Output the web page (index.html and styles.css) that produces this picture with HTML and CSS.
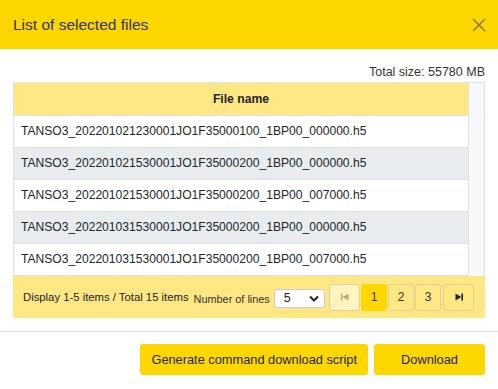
FILE: index.html
```html
<!DOCTYPE html>
<html>
<head>
  <link rel="stylesheet" href="styles.css">
</head>
<body>
  <div class="modal">
    <div class="modal-header">
      <span class="modal-title">List of selected files</span>
      <svg class="close" width="14" height="14" viewBox="0 0 14 14">
        <path d="M1 1 L13 13 M13 1 L1 13" stroke="currentColor" stroke-width="1.6" fill="none"/>
      </svg>
    </div>

    <div class="modal-body">
      <div class="total">Total size: 55780 MB</div>

      <div class="grid">
        <div class="grid-main">
          <div class="grid-head">File name</div>
          <div class="grid-row">TANSO3_202201021230001JO1F35000100_1BP00_000000.h5</div>
          <div class="grid-row alt">TANSO3_202201021530001JO1F35000200_1BP00_000000.h5</div>
          <div class="grid-row">TANSO3_202201021530001JO1F35000200_1BP00_007000.h5</div>
          <div class="grid-row alt">TANSO3_202201031530001JO1F35000200_1BP00_000000.h5</div>
          <div class="grid-row">TANSO3_202201031530001JO1F35000200_1BP00_007000.h5</div>
        </div>
        <div class="grid-scroll"></div>
      </div>

      <div class="pager">
        <span class="pager-info">Display 1-5 items / Total 15 items</span>
        <span class="pager-label">Number of lines</span>
        <div class="select">
          <span>5</span>
          <svg width="10" height="7" viewBox="0 0 10 7">
            <path d="M1 1.5 L5 5.5 L9 1.5" stroke="#222" stroke-width="2" fill="none"/>
          </svg>
        </div>
        <div class="pages">
          <div class="page disabled">
            <svg width="8" height="8" viewBox="0 0 8 8"><rect x="0" y="0.5" width="1.6" height="7" fill="#b9ad7a"/><path d="M7.5 0.5 L1.6 4 L7.5 7.5 Z" fill="#b9ad7a"/></svg>
          </div>
          <div class="page active">1</div>
          <div class="page">2</div>
          <div class="page">3</div>
          <div class="page wide">
            <svg width="8" height="8" viewBox="0 0 8 8"><path d="M0.5 0.5 L6.4 4 L0.5 7.5 Z" fill="#222"/><rect x="6.4" y="0.5" width="1.6" height="7" fill="#222"/></svg>
          </div>
        </div>
      </div>
    </div>

    <div class="modal-footer">
      <button class="btn">Generate command download script</button>
      <button class="btn btn-main">Download</button>
    </div>
  </div>
</body>
</html>
```

FILE: styles.css
```css
body {
  margin: 0;
  font-family: "Liberation Sans", Arial, sans-serif;
  color: #212529;
  background: #fff;
}

.modal {
  width: 498px;
  height: 389px;
  background: #fff;
}

.modal-header {
  height: 49px;
  background-color: #ffd700;
  display: flex;
  align-items: center;
  justify-content: space-between;
  padding: 0 12px 0 13px;
}

.modal-title {
  font-size: 15.5px;
  color: #333;
}

.close {
  color: #8c7a1c;
}

.modal-body {
  padding: 13px 13px 13px 13px;
}

.total {
  text-align: right;
  font-size: 12.5px;
  line-height: 20px;
  color: #333;
}

.grid {
  display: flex;
  border: 1px solid #dee2e6;
  border-bottom: none;
}

.grid-main {
  flex: 1;
}

.grid-scroll {
  width: 15px;
  background: #f7f8fa;
  border-left: 1px solid #dee2e6;
}

.grid-head {
  height: 32px;
  line-height: 32px;
  background-color: #ffe784;
  text-align: center;
  font-weight: bold;
  font-size: 12.2px;
  border-bottom: 1px solid #dee2e6;
}

.grid-row {
  height: 31px;
  line-height: 31px;
  padding-left: 7px;
  font-size: 12.1px;
  border-bottom: 1px solid #dee2e6;
  background: #fff;
}

.grid-row.alt {
  background: #e9ecef;
}

.pager {
  height: 42px;
  background-color: #ffe784;
  display: flex;
  align-items: center;
  padding: 0 11px 0 10px;
  white-space: nowrap;
}

.pager-info {
  font-size: 11.3px;
  margin-right: 5px;
}

.pager-label {
  font-size: 10.9px;
  margin-top: 3px;
  color: #333;
}

.select {
  flex-shrink: 0;
  height: 19px;
  width: 51px;
  margin-left: 4px;
  background: #fff;
  border: 1px solid #ccc;
  border-radius: 3px;
  display: flex;
  align-items: center;
  justify-content: space-between;
  padding: 0 5px 0 9px;
  box-sizing: border-box;
  font-size: 12.5px;
  margin-top: 2px;
}

.pages {
  display: flex;
  gap: 1px;
  margin-left: auto;
}

.page {
  width: 26px;
  height: 27px;
  box-sizing: border-box;
  border: 1px solid #ddd39a;
  border-radius: 3px;
  display: flex;
  align-items: center;
  justify-content: center;
  font-size: 12px;
  color: #333;
}

.page.disabled {
  width: 31px;
  background: #fff3c2;
}

.page.active {
  background: #ffd700;
  border-color: #ffd700;
}

.page.wide {
  width: 31px;
  margin-left: 1px;
}

.modal-footer {
  border-top: 1px solid #dee2e6;
  height: 56px;
  box-sizing: border-box;
  display: flex;
  justify-content: flex-end;
  align-items: center;
  gap: 6px;
  padding: 0 13px;
}

.btn {
  height: 31px;
  border: none;
  border-radius: 3px;
  background-color: #ffd700;
  font-family: "Liberation Sans", Arial, sans-serif;
  font-size: 12.8px;
  color: #212529;
  padding: 0 11px;
}

.btn-main {
  width: 111px;
}
```
